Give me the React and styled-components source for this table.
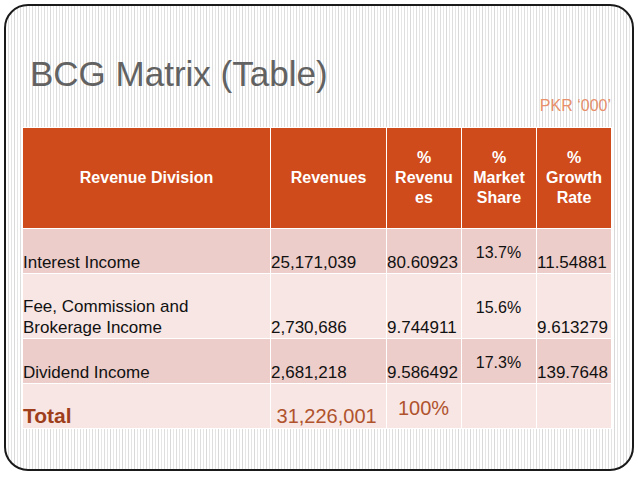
import React from "react";
import styled, { createGlobalStyle } from "styled-components";

const GlobalStyle = createGlobalStyle`
  html, body {
    margin: 0;
    padding: 0;
    background: #fff;
  }
`;

const Slide = styled.div`
  box-sizing: border-box;
  margin: 4px 0 0 4px;
  width: 630px;
  height: 467px;
  border: 2px solid #1a1a1a;
  border-radius: 24px;
  padding: 48px 21px 0 16px;
  display: flex;
  flex-direction: column;
  font-family: "Liberation Sans", Arial, sans-serif;
  background: repeating-linear-gradient(
    90deg,
    #fff 0 2px,
    #dedede 2px 3px,
    #fff 3px 5px,
    #e4e4e4 5px 6px,
    #fff 6px 8px,
    #d9d9d9 8px 9px,
    #fff 9px 11px,
    #e6e6e6 11px 12px
  );
`;

const Title = styled.h1`
  margin: 0 0 0 8px;
  font-size: 35px;
  line-height: 40px;
  font-weight: 400;
  color: #626262;
`;

const Unit = styled.div`
  align-self: flex-end;
  margin: 3px 0 12px;
  font-size: 16px;
  line-height: 18px;
  color: #e8906b;
`;

const Table = styled.table`
  width: 589px;
  border-collapse: collapse;
  table-layout: fixed;
`;

const HeadCell = styled.th`
  height: 100px;
  padding: 0 2px;
  border: 1px solid #fff;
  background: #d04b1b;
  color: #fff;
  font-size: 16px;
  line-height: 20px;
  font-weight: 700;
  text-align: center;
  vertical-align: middle;
`;

const Row = styled.tr`
  background: ${(p) => (p.$dark ? "#edcdca" : "#f7e6e4")};
`;

const Cell = styled.td`
  height: ${(p) => p.$h}px;
  padding: ${(p) => (p.$mid ? "3px 1px 0 0" : "0 1px 0 0")};
  border: 1px solid #fff;
  color: #111;
  font-size: 17px;
  line-height: 21px;
  vertical-align: ${(p) => (p.$mid ? "middle" : "bottom")};
  text-align: ${(p) => (p.$mid ? "center" : "left")};
  white-space: nowrap;
`;

const Share = styled.span`
  font-size: 16px;
`;

const TotalLabel = styled.span`
  font-size: 21px;
  line-height: 24px;
  font-weight: 700;
  color: #9e3e1b;
`;

const TotalValue = styled.span`
  font-size: 20px;
  line-height: 24px;
  color: #b0532d;
`;

const rows = [
  { name: "Interest Income", rev: "25,171,039", pct: "80.60923", share: "13.7%", growth: "11.54881", h: 44 },
  { name: ["Fee, Commission and", "Brokerage Income"], rev: "2,730,686", pct: "9.744911", share: "15.6%", growth: "9.613279", h: 64 },
  { name: "Dividend Income", rev: "2,681,218", pct: "9.586492", share: "17.3%", growth: "139.7648", h: 44 },
];

export default function App() {
  return (
    <>
      <GlobalStyle />
      <Slide>
        <Title>BCG Matrix (Table)</Title>
        <Unit>PKR ‘000’</Unit>
        <Table>
          <colgroup>
            <col style={{ width: 248 }} />
            <col style={{ width: 116 }} />
            <col style={{ width: 75 }} />
            <col style={{ width: 75 }} />
            <col style={{ width: 75 }} />
          </colgroup>
          <thead>
            <tr>
              <HeadCell>Revenue Division</HeadCell>
              <HeadCell>Revenues</HeadCell>
              <HeadCell>%<br />Revenu<br />es</HeadCell>
              <HeadCell>%<br />Market<br />Share</HeadCell>
              <HeadCell>%<br />Growth<br />Rate</HeadCell>
            </tr>
          </thead>
          <tbody>
            {rows.map((r, i) => (
              <Row key={i} $dark={i % 2 === 0}>
                <Cell $h={r.h}>
                  {Array.isArray(r.name) ? (
                    <>
                      {r.name[0]}
                      <br />
                      {r.name[1]}
                    </>
                  ) : (
                    r.name
                  )}
                </Cell>
                <Cell>{r.rev}</Cell>
                <Cell>{r.pct}</Cell>
                <Cell $mid>
                  <Share>{r.share}</Share>
                </Cell>
                <Cell>{r.growth}</Cell>
              </Row>
            ))}
            <Row>
              <Cell $h={44}>
                <TotalLabel>Total</TotalLabel>
              </Cell>
              <Cell>
                <TotalValue>&nbsp;31,226,001</TotalValue>
              </Cell>
              <Cell $mid>
                <TotalValue>100%</TotalValue>
              </Cell>
              <Cell />
              <Cell />
            </Row>
          </tbody>
        </Table>
      </Slide>
    </>
  );
}
